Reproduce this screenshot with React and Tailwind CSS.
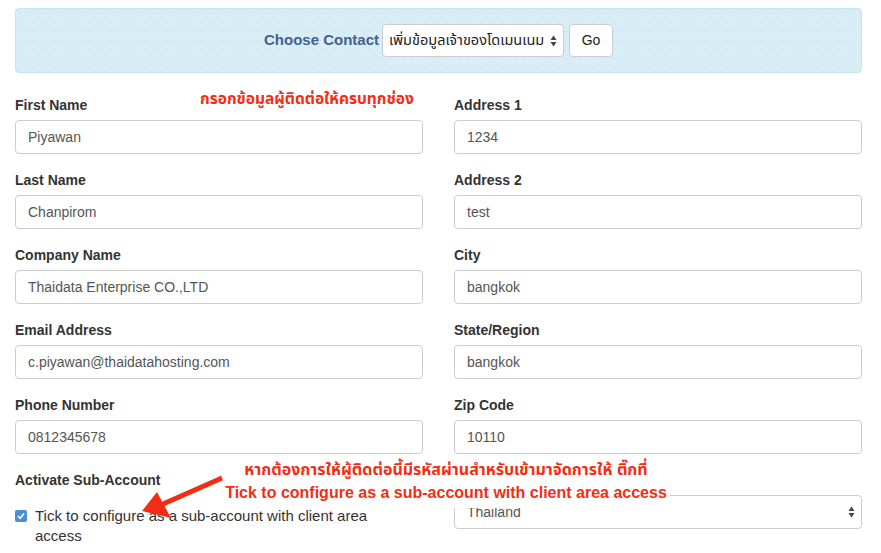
import React from 'react';

const fontStack = { fontFamily: '"Liberation Sans", "Noto Sans Thai", "Noto Sans", Arial, sans-serif' };

const leftFields = [
  { label: 'First Name', value: 'Piyawan' },
  { label: 'Last Name', value: 'Chanpirom' },
  { label: 'Company Name', value: 'Thaidata Enterprise CO.,LTD' },
  { label: 'Email Address', value: 'c.piyawan@thaidatahosting.com' },
  { label: 'Phone Number', value: '0812345678' },
];

const rightFields = [
  { label: 'Address 1', value: '1234' },
  { label: 'Address 2', value: 'test' },
  { label: 'City', value: 'bangkok' },
  { label: 'State/Region', value: 'bangkok' },
  { label: 'Zip Code', value: '10110' },
];

const UpDown = () => (
  <svg width="7" height="12" viewBox="0 0 7 12" className="shrink-0">
    <path d="M3.5 0.5 L6.5 5 L0.5 5 Z" fill="#444" />
    <path d="M3.5 11.5 L6.5 7 L0.5 7 Z" fill="#444" />
  </svg>
);

const Field = ({ label, value }) => (
  <div className="mb-[16px]">
    <div className="h-[20px] mb-[5px] text-[14px] leading-[20px] font-bold text-[#333]">{label}</div>
    <div className="h-[34px] border border-[#ccc] rounded-[4px] bg-white px-[12px] flex items-center text-[14px] text-[#555]">
      {value}
    </div>
  </div>
);

export default function App() {
  return (
    <div className="relative w-[881px] h-[553px] overflow-hidden bg-white pl-[15px] pt-[8px]" style={fontStack}>
      <div className="w-[847px]">
        <div className="h-[65px] rounded-[4px] border border-[#bce8f1] bg-[#d9edf7] bg-[radial-gradient(#c8deec_0.6px,transparent_0.7px)] bg-[size:7px_9px] flex items-center justify-center">
          <span className="text-[15px] font-bold text-[#44618f] mr-[3px]">Choose Contact</span>
          <div className="h-[33px] w-[182px] rounded-[4px] border border-[#ccc] bg-white flex items-center justify-between pl-[6px] pr-[6px] text-[14.5px] text-[#222]">
            <span>เพิ่มข้อมูลเจ้าของโดเมนเนม</span>
            <UpDown />
          </div>
          <button className="ml-[5px] h-[33px] w-[44px] rounded-[4px] border border-[#ccc] bg-white text-[14px] text-[#222]">Go</button>
        </div>

        <div className="grid grid-cols-2 gap-x-[31px] mt-[22px]">
          <div>
            {leftFields.map((f) => (
              <Field key={f.label} {...f} />
            ))}
            <div className="h-[20px] text-[14px] leading-[20px] font-bold text-[#333]">Activate Sub-Account</div>
            <div className="mt-[16px] flex items-start">
              <span className="mt-[4px] w-[12px] h-[12px] rounded-[2px] bg-[#4a90d9] flex items-center justify-center shrink-0">
                <svg width="8" height="8" viewBox="0 0 8 8">
                  <path d="M1 4.2 L3.2 6.3 L7 1.5" stroke="#fff" strokeWidth="1.6" fill="none" />
                </svg>
              </span>
              <span className="ml-[8px] max-w-[370px] text-[15px] leading-[20px] text-[#333]">
                Tick to configure as a sub-account with client area access
              </span>
            </div>
          </div>
          <div>
            {rightFields.map((f) => (
              <Field key={f.label} {...f} />
            ))}
            {/* Country label sits under the annotation in the screenshot */}
            <div className="h-[20px] mb-[5px]" />
            <div className="h-[34px] border border-[#ccc] rounded-[4px] bg-white pl-[12px] pr-[6px] flex items-center justify-between text-[14px] text-[#555]">
              <span>Thailand</span>
              <UpDown />
            </div>
          </div>
        </div>
      </div>

      {/* annotations */}
      <div className="absolute left-[198px] top-[88px] bg-white px-[2px] text-[15.5px] font-bold leading-[22px] text-[#f32d14]">
        กรอกข้อมูลผู้ติดต่อให้ครบทุกช่อง
      </div>
      <div className="absolute left-[222px] top-[458px] w-[448px] h-[50px] bg-white flex flex-col items-center text-[#f32d14] font-bold">
        <span className="text-[16px] leading-[24px]">หากต้องการให้ผู้ติดต่อนี้มีรหัสผ่านสำหรับเข้ามาจัดการให้ ติ๊กที่</span>
        <span className="text-[16px] leading-[22px]">Tick to configure as a sub-account with client area access</span>
      </div>
      <svg className="absolute left-0 top-0 pointer-events-none" width="881" height="553">
        <line x1="222" y1="478" x2="163" y2="504" stroke="#f32d14" strokeWidth="5" />
        <path d="M142 511 L157 492 L171 518 Z" fill="#f32d14" />
      </svg>
    </div>
  );
}
